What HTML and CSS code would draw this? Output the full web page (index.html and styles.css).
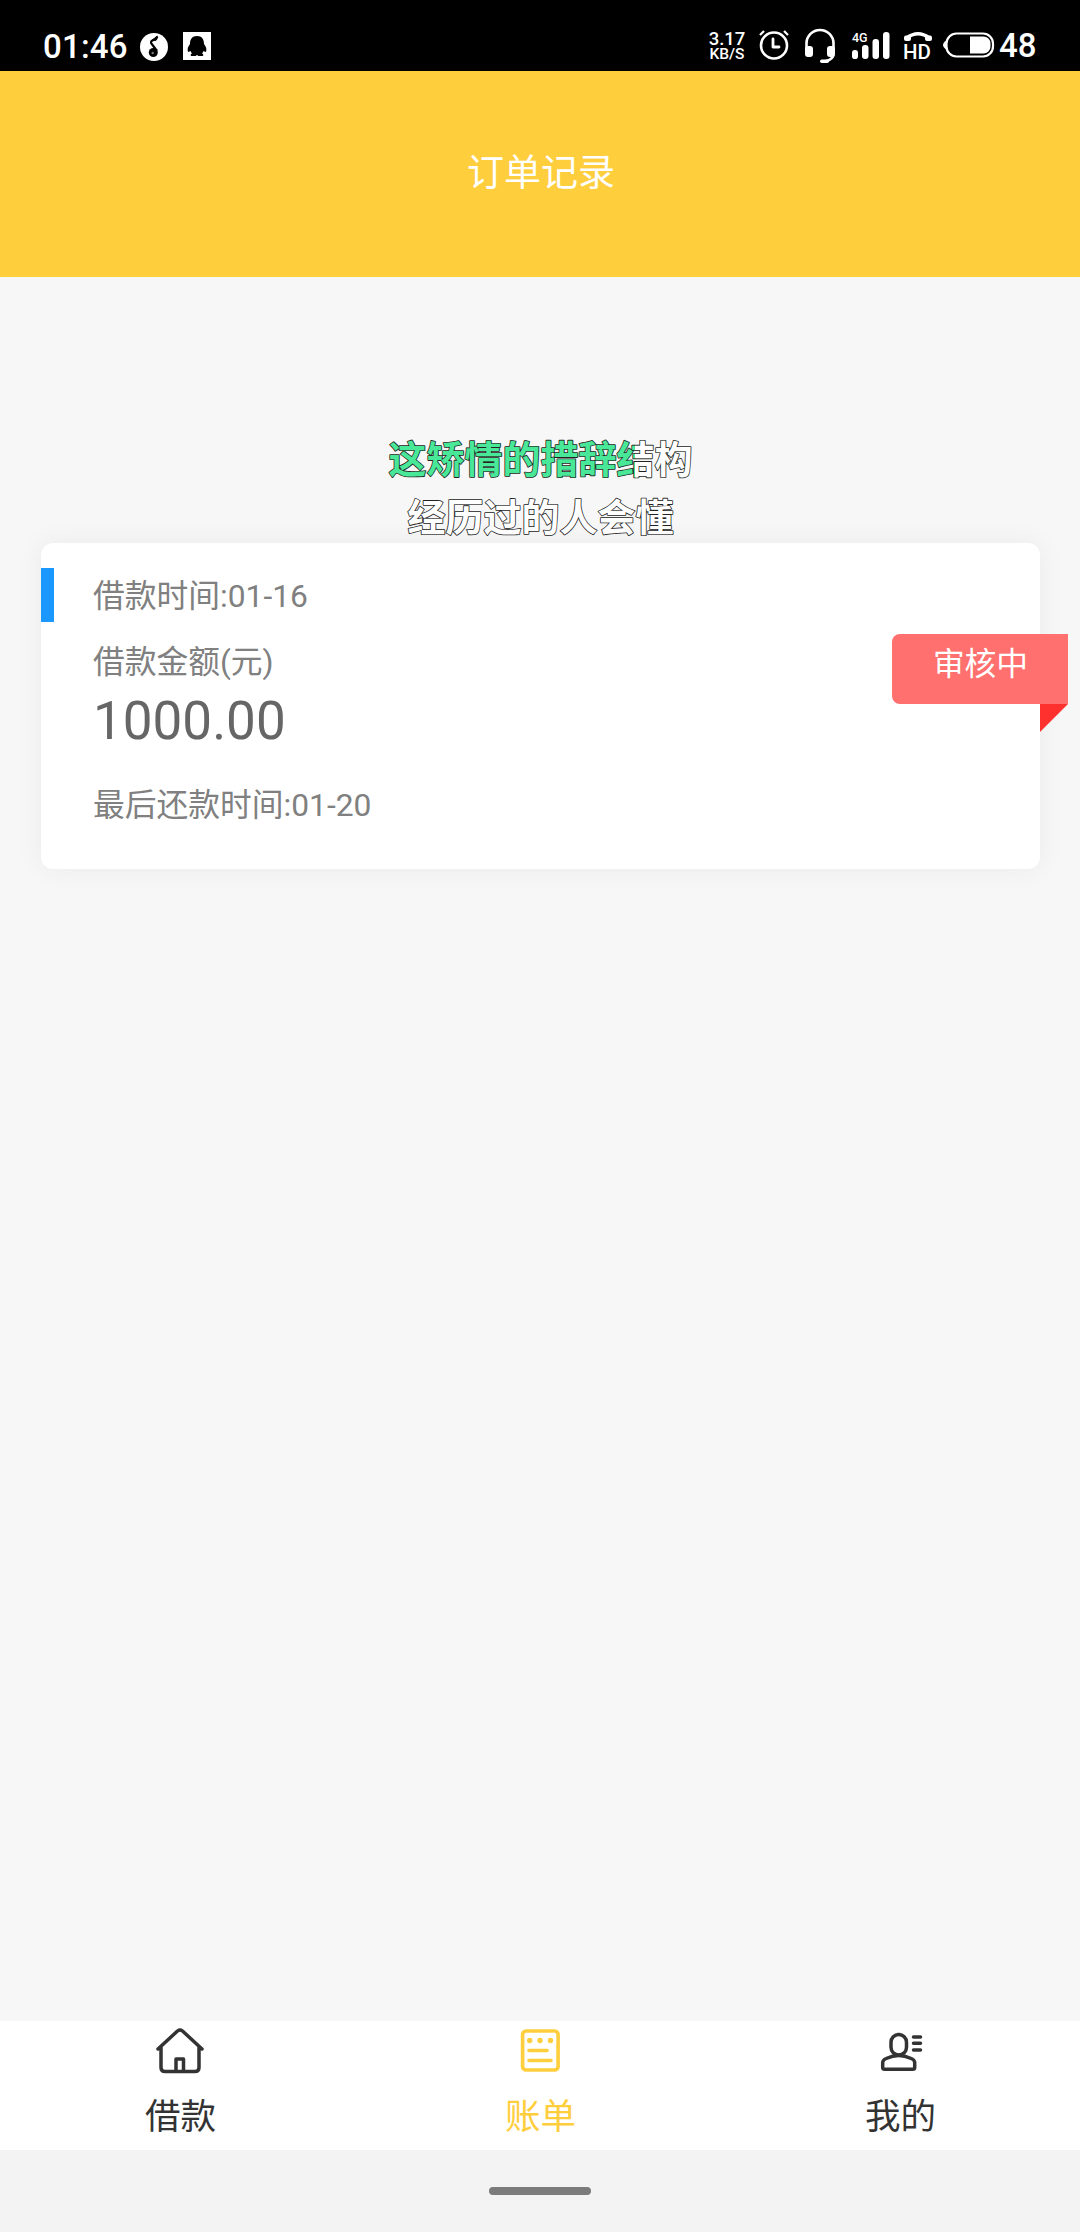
FILE: index.html
```html
<!DOCTYPE html>
<html lang="zh-CN">
<head>
<meta charset="utf-8">
<title>订单记录</title>
<link rel="stylesheet" href="styles.css">
</head>
<body>
<div class="screen">
  <div class="status">
    <div class="status-left">
      <span class="clock">01:46</span>
      <svg class="ic-music" width="28" height="28" viewBox="0 0 28 28"><circle cx="14" cy="14" r="14" fill="#fff"/><path d="M17.500 3.500q-1.500 3-4.500 3.800-3.500 1.500-1 4l5 6.700" fill="none" stroke="#000" stroke-width="2.200"/><path d="M11.500 7l6-4.500q.8 4-2 5.500z"/><circle cx="13.300" cy="19.500" r="4.500"/><circle cx="12.700" cy="20" r="1.200" fill="#777"/></svg>
      <svg class="ic-qq" width="28" height="28" viewBox="0 0 28 28"><path fill="#fff" d="M0 0h28v28H0z"/><path d="M14 4c-5 0-7 3.500-7 8-2 2.500-3 5-2 8 1 0 2-1 2.500-1 .5 1 1 2 1.500 2.500-1.500.5-2 2.500 0 2.500h3.500l1.500-1 1.500 1H19c2 0 1.500-2 0-2.500.5-.5 1-1.500 1.500-2.500.5 0 1.500 1 2.500 1 1-3 0-5.500-2-8 0-4.500-2-8-7-8z"/></svg>
    </div>
    <div class="status-right">
      <div class="speed"><span class="rate">3.17</span><span class="unit">KB/S</span></div>
      <svg class="ic-alarm" width="30" height="30" viewBox="0 0 30 30" fill="none" stroke="#fff"><circle cx="15" cy="15.500" r="13" stroke-width="2.600"/><path d="M14 9v8h6" stroke-width="2.800" stroke-linecap="round" stroke-linejoin="round"/><path d="M1 5l4-4M29 5l-4-4" stroke-width="2.200"/></svg>
      <svg class="ic-headset" width="30" height="34" viewBox="0 0 30 34"><path d="M1.500 20v-5.500a13.500 13.500 0 0 1 27 0V24q0 7-8 8" fill="none" stroke="#fff" stroke-width="2.600"/><rect y="17" width="8" height="11" rx="3" fill="#fff"/><rect x="22" y="17" width="8" height="11" rx="3" fill="#fff"/><rect x="15" y="30.500" width="9" height="3.500" rx="1.700" fill="#fff"/></svg>
      <svg class="ic-signal" width="38" height="30" viewBox="0 0 38 30"><text x="0" y="12" class="net">4G</text><g fill="#fff"><rect x="0" y="20" width="6" height="9" rx="2.800"/><rect x="10" y="15" width="6.500" height="14" rx="3"/><rect x="20.500" y="9" width="6.500" height="20" rx="3"/><rect x="31" y="2" width="6.500" height="27" rx="3"/></g></svg>
      <svg class="ic-hd" width="30" height="34" viewBox="0 0 30 34"><path d="M3.500 7Q15-1.500 26.500 7" fill="none" stroke="#fff" stroke-width="3.200"/><rect x="1" y="4.500" width="7" height="5.500" rx="2" fill="#fff"/><rect x="22" y="4.500" width="7" height="5.500" rx="2" fill="#fff"/><text x="0" y="28" class="hd">HD</text></svg>
      <svg class="ic-battery" width="52" height="28" viewBox="0 0 52 28"><path d="M4 9q-4 2.500-4 5t4 5z" fill="#fff"/><rect x="3.500" y="2.500" width="46.500" height="23" rx="10" fill="none" stroke="#fff" stroke-width="2.200"/><path d="M27 5.500h13.500a7 7 0 0 1 7 7v3a7 7 0 0 1-7 7H27z" fill="#fff"/></svg>
      <span class="level">48</span>
    </div>
  </div>

  <header class="header">订单记录</header>

  <main class="content">
    <svg class="lyrics" width="320" height="112" viewBox="0 0 320 112">
      <defs><linearGradient id="progress" gradientUnits="userSpaceOnUse" x1="0" y1="0" x2="320" y2="0"><stop offset=".794" stop-color="#48e898"/><stop offset=".794" stop-color="#fff"/></linearGradient></defs>
      <text x="159.500" y="41.500" fill="url(#progress)">这矫情的措辞结构</text>
      <text x="159.500" y="99.500" fill="#fff">经历过的人会懂</text>
    </svg>
    <section class="card">
      <div class="row start">借款时间:01-16</div>
      <div class="row label">借款金额(元)</div>
      <div class="amount">1000.00</div>
      <div class="row due">最后还款时间:01-20</div>
      <div class="ribbon">审核中</div>
    </section>
  </main>

  <nav class="tabs">
    <div class="tab">
      <svg width="48" height="48" viewBox="0 0 48 48" fill="none" stroke="#333" stroke-width="3.500" stroke-linejoin="round" stroke-linecap="round"><path d="M2 22L21.500 4q2.500-2 5 0L46 22M5 20v20.500q0 4 4 4h30q4 0 4-4V20M20 44V32h7.500v12"/></svg>
      <span>借款</span>
    </div>
    <div class="tab active">
      <svg width="48" height="48" viewBox="0 0 48 48" fill="none" stroke="#ffce3d" stroke-width="3.600" stroke-linecap="round"><rect x="6.600" y="4" width="35.500" height="39" rx="3.500"/><path d="M13 23.500h18M13 33.500h22"/><g fill="#ffce3d" stroke="none"><circle cx="13.700" cy="13.500" r="2.700"/><circle cx="24" cy="13.500" r="2.700"/><circle cx="34.500" cy="13.500" r="2.700"/></g></svg>
      <span>账单</span>
    </div>
    <div class="tab">
      <svg width="48" height="48" viewBox="0 0 48 48" fill="none" stroke="#333" stroke-width="3.500" stroke-linecap="round"><rect x="15" y="7.500" width="15.500" height="20.500" rx="7.700"/><path d="M22.700 28.500q-6 0-12.500 3-3.500 1.500-3.500 4v5q0 1.800 2 1.800h28q2 0 2-1.800v-5q0-2.500-3.500-4-6.500-3-12.500-3zM37.500 10h7M37.500 16.300h7M37.500 23h7"/></svg>
      <span>我的</span>
    </div>
  </nav>
  <div class="gesture"><div class="pill"></div></div>
</div>
</body>
</html>
```
FILE: styles.css
```css
* { box-sizing: border-box; }

body {
  margin: 0;
  background: #f7f7f7;
  font-family: Roboto, "Noto Sans CJK SC", sans-serif;
}

.screen {
  width: 1080px;
  height: 2232px;
  display: flex;
  flex-direction: column;
  overflow: hidden;
}

.status {
  height: 71px;
  flex: none;
  background: #000;
  color: #fff;
  display: flex;
  justify-content: space-between;
  padding: 0 43px;
  font-weight: 500;
}

.status svg {
  flex: none;
  overflow: visible;
}

.status-left,
.status-right {
  display: flex;
  align-items: flex-start;
}

.clock {
  width: 97px;
  margin-top: 27px;
  font-size: 33px;
  line-height: 40px;
  letter-spacing: 0.2px;
}

.ic-music { margin-top: 33px; }
.ic-qq { margin: 32px 0 0 15px; }

.speed {
  width: 38px;
  margin: 31px 13px 0 0;
  display: flex;
  flex-direction: column;
  align-items: center;
}

.rate { font-size: 18.500px; line-height: 16px; }
.unit { font-size: 15.500px; line-height: 15px; }

.ic-alarm { margin-top: 30px; }
.ic-headset { margin: 29px 0 0 16px; }
.ic-signal { margin: 30px 0 0 17px; }
.ic-hd { margin: 31px 0 0 13px; }
.ic-battery { margin: 31px 0 0 10px; }

.net { font-size: 12.500px; fill: #fff; }
.hd { font-size: 20.500px; fill: #fff; }

.level {
  width: 38px;
  margin: 26px 0 0 4px;
  font-size: 33px;
  line-height: 40px;
}

.header {
  height: 206px;
  flex: none;
  padding: 73px 0 0 2px;
  background: #ffce3d;
  color: #fff;
  font-size: 37px;
  line-height: 60px;
  text-align: center;
}

.content {
  flex: 1;
  padding: 154px 40px 0 41px;
}

.lyrics {
  display: block;
  margin: 0 auto;
  font-size: 38px;
  font-weight: 700;
  text-anchor: middle;
  stroke: #222;
  stroke-width: 1.600px;
  stroke-linejoin: round;
  paint-order: stroke;
}

.card {
  position: relative;
  height: 326px;
  padding: 30px 52px 0;
  border-radius: 12px;
  background: #fff;
  box-shadow: 0 0 28px rgba(0, 0, 0, 0.055);
}

.card::before {
  content: "";
  position: absolute;
  left: 0;
  top: 25px;
  width: 13px;
  height: 54px;
  background: #1b98ff;
}

.row {
  color: #808080;
  font-size: 31.750px;
  line-height: 48px;
}

.label { margin-top: 18px; }

.amount {
  margin-top: 4px;
  color: #666;
  font-size: 53px;
  line-height: 60px;
}

.due { margin-top: 31px; }

.ribbon {
  position: absolute;
  right: -28px;
  top: 91px;
  width: 176px;
  height: 70px;
  padding: 7px 0 0 1px;
  border-radius: 8px 0 0 8px;
  background: #ff706e;
  color: #fff;
  font-size: 31.750px;
  line-height: 48px;
  text-align: center;
}

.ribbon::after {
  content: "";
  position: absolute;
  right: 0;
  top: 70px;
  width: 28px;
  height: 28px;
  background: #ff312f;
  clip-path: polygon(0 0, 100% 0, 0 100%);
}

.tabs {
  height: 129px;
  flex: none;
  display: flex;
  justify-content: space-around;
  background: #fff;
}

.tab {
  width: 360px;
  display: flex;
  flex-direction: column;
  align-items: center;
  padding-top: 6px;
  color: #333;
  font-size: 35.500px;
  line-height: 50px;
}

.tab span { margin: 17px 0 0 1px; }
.active { color: #ffce3d; }

.gesture {
  height: 82px;
  flex: none;
  display: flex;
  justify-content: center;
  padding-top: 37px;
  background: #f3f3f3;
}

.pill {
  width: 102px;
  height: 8px;
  border-radius: 4px;
  background: #7b7b7b;
}
```
